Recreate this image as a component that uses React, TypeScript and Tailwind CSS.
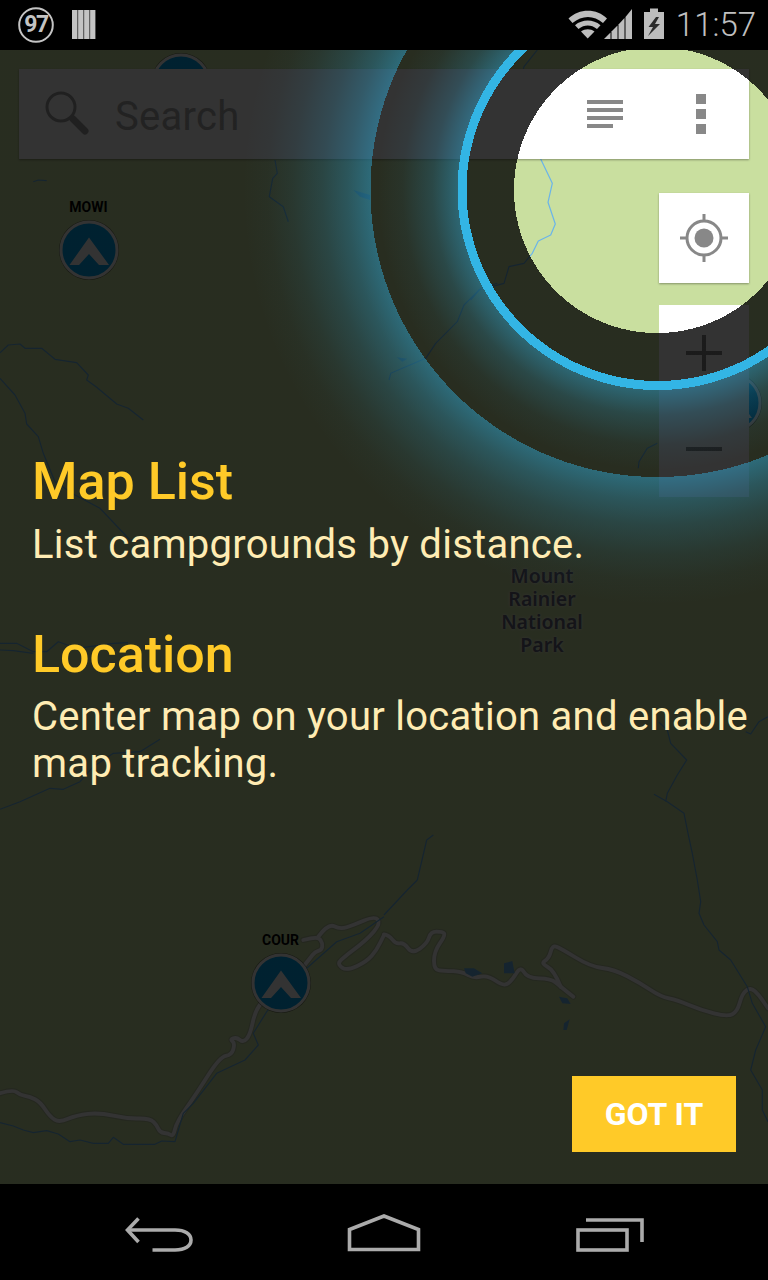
import React from "react";

type P = [number, number];
// Points are read from 3x crops: page = origin + crop / 3.
const path = (ox: number, oy: number, pts: P[], close = false) =>
  "M" + pts.map(([x, y]) => `${(ox + x / 3).toFixed(1)} ${(oy + y / 3).toFixed(1)}`).join("L") + (close ? "Z" : "");

// Same points, but with the corners rounded through midpoints (roads curve, rivers wiggle).
const smooth = (ox: number, oy: number, pts: P[]) => {
  const q = pts.map(([x, y]) => [ox + x / 3, oy + y / 3]);
  let d = `M${q[0][0].toFixed(1)} ${q[0][1].toFixed(1)}`;
  for (let i = 1; i < q.length - 1; i++) {
    const mx = (q[i][0] + q[i + 1][0]) / 2;
    const my = (q[i][1] + q[i + 1][1]) / 2;
    d += `Q${q[i][0].toFixed(1)} ${q[i][1].toFixed(1)} ${mx.toFixed(1)} ${my.toFixed(1)}`;
  }
  const l = q[q.length - 1];
  return d + `L${l[0].toFixed(1)} ${l[1].toFixed(1)}`;
};

const roads: string[] = [
  smooth(0, 880, [[0,640],[40,628],[60,645],[90,650],[120,665],[150,710],[178,728],[230,705],[300,698],[380,716],[450,715],[470,735],[480,758],[505,760],[520,770],[530,725],[590,640],[660,530],[695,525],[705,490],[690,478],[710,472],[730,488],[750,465],[765,395],[790,360]]),
  smooth(0, 880, [[910,260],[930,235],[945,215],[965,210],[968,190],[955,170],[910,180]]),
  smooth(0, 880, [[955,170],[985,130],[1020,148],[1060,135],[1125,108],[1142,130],[1100,180],[1020,240],[1015,255],[1040,272],[1100,245],[1130,210],[1152,165]]),
  smooth(384, 880, [[0,163],[15,165],[35,192],[60,188],[85,222],[130,190],[140,155],[175,155],[185,165],[150,215],[150,270],[180,272],[235,275],[270,295],[310,285],[360,320],[385,300],[410,258],[430,295],[500,295],[530,320],[568,350]]),
  smooth(384, 880, [[530,320],[510,270],[470,250],[495,235],[505,195],[530,205],[620,260],[690,268],[770,310],[830,350],[880,360],[950,390],[1030,410],[1060,395],[1075,340],[1100,322],[1125,345],[1152,385]]),
];

const rivers: string[] = [
  path(0, 880, [[0,728],[40,738],[70,750],[100,758],[140,752],[175,762],[210,785],[240,780],[280,790],[325,790],[340,772],[370,793],[465,793],[485,783],[525,785],[550,700],[580,670],[650,580],[735,540],[775,495],[760,460],[800,395],[920,265],[1010,185],[1080,160],[1152,110]]),
  path(384, 560, [[148,825],[128,840],[100,960]]),
  path(384, 880, [[100,0],[70,30],[0,105]]),
  path(384, 880, [[940,0],[950,65],[945,100],[960,135],[1000,185],[1005,210],[1040,240],[1090,320],[1105,370],[1145,440],[1115,510],[1100,570],[1135,630],[1135,690],[1152,725]]),
  path(384, 560, [[810,703],[850,725],[900,760],[912,820],[925,880],[940,960]]),
  path(384, 560, [[845,725],[850,700],[880,645],[908,600],[860,550],[850,510],[825,487]]),
  path(384, 560, [[1152,470],[1125,485],[1100,522],[1085,515]]),
  path(0, 300, [[0,158],[25,135],[60,132],[75,145],[125,145],[165,178],[230,188],[265,225],[260,240],[290,262],[350,312],[385,325],[430,360]]),
  path(0, 300, [[0,235],[45,285],[75,340],[80,372],[115,410],[130,460],[165,545],[225,585],[300,625],[390,720],[460,720]]),
  path(0, 580, [[0,190],[50,190],[100,215],[140,215],[175,185],[230,205],[340,190],[384,188]]),
  path(0, 580, [[0,210],[40,212],[100,220]]),
  path(0, 580, [[0,688],[60,665],[150,625],[190,628],[240,605],[280,560],[340,520],[420,515],[480,478]]),
  path(384, 0, [[460,150],[420,200],[410,240],[470,477]]),
  path(384, 0, [[470,477],[505,550],[492,607],[514,672],[500,705],[463,723],[445,760],[420,790],[375,800],[360,850],[285,870],[260,900]]),
  path(384, 280, [[340,10],[290,25],[240,75],[220,125],[155,190],[125,235],[20,280],[15,300]]),
  path(0, 0, [[825,480],[832,520],[818,535],[808,590],[850,620],[865,665]]),
  path(0, 0, [[100,545],[115,540],[140,542]]),
  path(384, 280, [[820,490],[790,505],[765,545],[763,565]]),
];

const lakes: string[] = [
  path(384, 880, [[240,265],[270,265],[295,280],[265,290],[245,280]], true),
  path(384, 880, [[360,250],[385,243],[392,280],[360,280]], true),
  path(384, 880, [[525,350],[550,355],[560,372],[535,370]], true),
  path(384, 880, [[540,430],[557,418],[548,450],[538,450]], true),
  path(0, 0, [[1060,570],[1110,585],[1110,600],[1080,590]], true),
  path(384, 280, [[38,232],[70,236],[55,245]], true),
];

function Marker({ label, x, y }: { label?: string; x: number; y: number }) {
  return (
    <div className="absolute" style={{ left: x - 30, top: y - 30 - 50 }}>
      {label && (
        <div className="absolute left-[-10px] top-[-21px] w-[80px] text-center font-['Roboto',sans-serif] text-[14px] font-bold leading-[16px] text-black">
          {label}
        </div>
      )}
      <svg width="60" height="60" viewBox="0 0 60 60">
        <circle cx="30" cy="30" r="30" fill="#000" fillOpacity="0.45" />
        <circle cx="30" cy="30" r="28" fill="#00a6f0" stroke="#fff" strokeWidth="3" />
        <path d="M10.5 45 30 17.5 50 45H40L30 34 20 45Z" fill="#fff" />
      </svg>
    </div>
  );
}

function StatusBar() {
  return (
    <div className="relative h-[50px] w-full shrink-0 bg-black">
      <svg width="768" height="50" viewBox="0 0 768 50" className="absolute inset-0">
        <circle cx="36" cy="25" r="16.8" fill="none" stroke="#c4c4c4" strokeWidth="2" />
        {[72, 78, 84, 90].map((x) => (
          <rect key={x} x={x} y="10" width="5.4" height="29" fill="#c4c4c4" />
        ))}
        {[77.4, 83.4, 89.4].map((x) => (
          <rect key={x} x={x} y="10" width="0.9" height="29" fill="#6e6e6e" />
        ))}
        {/* wifi */}
        <path d="M568.5 18.5C579 8 597 8 607 18.5L603 23C594 15 582 15 572.5 23Z" fill="#bdbdbd" />
        <path d="M575 25.2C582.5 19 593 19 600.5 25.2L597 29C591 24.4 584.5 24.4 578.5 29Z" fill="#bdbdbd" />
        <path d="M581 31.5C585 28.6 590.5 28.6 594.5 31.5L587.7 38.5Z" fill="#bdbdbd" />
        {/* signal */}
        <path d="M604 39 610.5 32.5V39Z" fill="#bdbdbd" />
        <path d="M611.5 31.5 617.5 25.5V39H611.5Z" fill="#bdbdbd" />
        <path d="M618.5 24.5 624.5 18V39H618.5Z" fill="#bdbdbd" />
        <path d="M625.5 17 632 9V39H625.5Z" fill="#bdbdbd" />
        {/* battery */}
        <path d="M644 12H650V8.5H658V12H664V39H644Z" fill="#bdbdbd" />
        <path d="M656 17 648.5 27H653L648 36 660 24H655L659 17Z" fill="#2b2b2b" />
      </svg>
      <span className="absolute left-[19px] top-[10px] w-[34px] text-center font-['Roboto',sans-serif] text-[23px] font-bold leading-[30px] tracking-[-1.5px] text-[#c4c4c4]">
        97
      </span>
      <span className="absolute right-[12px] top-[6px] font-['Roboto',sans-serif] text-[33px] font-light leading-[38px] text-[#c0c0c0]">
        11:57
      </span>
    </div>
  );
}

function NavBar() {
  return (
    <div className="h-[96px] w-full shrink-0 bg-black">
      <svg width="768" height="96" viewBox="0 1184 768 96" fill="none" stroke="#ababab" strokeWidth="3.6">
        <path d="M138.5 1218.5 127.5 1230 138.5 1242" />
        <path d="M127.5 1230H175C185 1230 191 1234 191 1240S185 1250 175 1250H152.5" />
        <path d="M349.5 1249.5V1229.5L384 1216 418.5 1229.5V1249.5Z" />
        <rect x="578" y="1230" width="49" height="20" />
        <path d="M586 1220H642V1242" />
      </svg>
    </div>
  );
}

function SearchBar() {
  return (
    <div className="flex h-[90px] w-full items-center bg-white shadow-[0_1px_2px_rgba(0,0,0,0.35)]">
      <svg width="46" height="46" viewBox="0 0 46 46" className="ml-[25px] shrink-0" fill="none" stroke="#a0a0a0">
        <circle cx="17" cy="16" r="14" strokeWidth="3" />
        <path d="M29 28 41 40" strokeWidth="7" strokeLinecap="round" />
      </svg>
      <span className="ml-[25px] mt-[6px] flex-1 font-['Roboto',sans-serif] text-[40px] leading-[44px] tracking-[0.3px] text-[#ababab]">
        Search
      </span>
      <svg width="36" height="28" viewBox="0 0 36 28" fill="#888888" className="mr-[73px] shrink-0">
        <rect y="0" width="36" height="4" />
        <rect y="8" width="36" height="4" />
        <rect y="16" width="36" height="4" />
        <rect y="24" width="26" height="4" />
      </svg>
      <svg width="10" height="40" viewBox="0 0 10 40" fill="#888888" className="mr-[43px] shrink-0">
        <rect y="0" width="10" height="10" />
        <rect y="15" width="10" height="10" />
        <rect y="30" width="10" height="10" />
      </svg>
    </div>
  );
}

export default function App() {
  return (
    <div className="flex h-[1280px] w-[768px] flex-col overflow-hidden bg-black">
      <StatusBar />
      <main className="relative min-h-0 flex-1 overflow-hidden bg-[#c9df9f]">
        {/* Map */}
        <svg width="768" height="1134" viewBox="0 50 768 1134" className="absolute inset-0" fill="none">
          {roads.map((d, i) => (
            <path key={`c${i}`} d={d} stroke="#b4c49a" strokeWidth="6" strokeLinejoin="round" strokeLinecap="round" />
          ))}
          {roads.map((d, i) => (
            <path key={`r${i}`} d={d} stroke="#ffffff" strokeWidth="3.8" strokeLinejoin="round" strokeLinecap="round" />
          ))}
          {rivers.map((d, i) => (
            <path key={`w${i}`} d={d} stroke="#6ab4ea" strokeWidth="1.2" strokeLinejoin="round" />
          ))}
          {lakes.map((d, i) => (
            <path key={`l${i}`} d={d} fill="#6ab4ea" />
          ))}
        </svg>
        <div className="absolute left-[482px] top-[514px] w-[120px] whitespace-pre-line text-center font-['Noto_Sans',sans-serif] text-[19.5px] font-semibold leading-[23px] text-[#62627a] [text-shadow:0_0_3px_#ffffff]">
          {"Mount\nRainier\nNational\nPark"}
        </div>
        <Marker x={181} y={83} />
        <Marker label="MOWI" x={88.5} y={250} />
        <Marker label="COUR" x={280.5} y={983} />
        <Marker x={732} y={403} />

        {/* Map controls */}
        <div className="absolute inset-0 flex flex-col items-end px-[19px] pt-[19px]">
          <SearchBar />
          <div className="mt-[34px] flex h-[90px] w-[90px] items-center justify-center bg-white shadow-[0_1px_2px_rgba(0,0,0,0.35)]">
            <svg width="48" height="48" viewBox="0 0 48 48" fill="none" stroke="#888888">
              <circle cx="24" cy="24" r="17" strokeWidth="3" />
              <circle cx="24" cy="24" r="9.5" fill="#888888" stroke="none" />
              <path d="M24 0V7M24 41V48M0 24H7M41 24H48" strokeWidth="3" />
            </svg>
          </div>
          <div className="mt-[22px] flex h-[192px] w-[90px] flex-col bg-white">
            <div className="flex h-[96px] items-center justify-center">
              <svg width="36" height="36" viewBox="0 0 36 36" fill="#888888">
                <rect y="16" width="36" height="4" />
                <rect x="16" width="4" height="36" />
              </svg>
            </div>
            <div className="flex h-[96px] items-center justify-center">
              <svg width="36" height="4" viewBox="0 0 36 4" fill="#888888">
                <rect width="36" height="4" />
              </svg>
            </div>
          </div>
        </div>

        {/* Dim with a hole */}
        <div className="absolute inset-0 bg-[radial-gradient(circle_at_657px_140px,transparent_143px,rgba(0,0,0,0.8)_143px)]" />
        {/* Blue ring and glow */}
        <div className="absolute inset-0 bg-[radial-gradient(circle_at_657.5px_140px,transparent_191px,#33b5e5_191px,#33b5e5_200px,rgba(51,181,229,0.42)_200px,rgba(51,181,229,0.2)_225px,rgba(51,181,229,0.05)_255px,transparent_280px,transparent_287px,rgba(51,181,229,0.45)_287px,rgba(51,181,229,0.3)_310px,rgba(51,181,229,0.18)_335px,rgba(51,181,229,0.08)_365px,rgba(51,181,229,0.025)_390px,transparent_415px)]" />

        {/* Teaching text */}
        <div className="absolute inset-0 flex flex-col pl-[32px] pr-[16px] pt-[402px] font-['Roboto',sans-serif]">
          <h2 className="text-[52px] font-medium leading-[60px] text-[#ffca28]">Map List</h2>
          <p className="mt-[9px] text-[40px] leading-[47px] tracking-[0.27px] text-[#ffecb3]">List campgrounds by distance.</p>
          <h2 className="mt-[57px] text-[52px] font-medium leading-[60px] text-[#ffca28]">Location</h2>
          <p className="mt-[8px] text-[40px] leading-[47px] tracking-[0.27px] text-[#ffecb3]">
            Center map on your location and enable map tracking.
          </p>
        </div>

        <div className="absolute bottom-[32px] right-[32px] flex h-[76px] w-[164px] items-center justify-center bg-[#ffca28] font-['Roboto',sans-serif] text-[32px] font-bold text-white">
          GOT IT
        </div>
      </main>
      <NavBar />
    </div>
  );
}
